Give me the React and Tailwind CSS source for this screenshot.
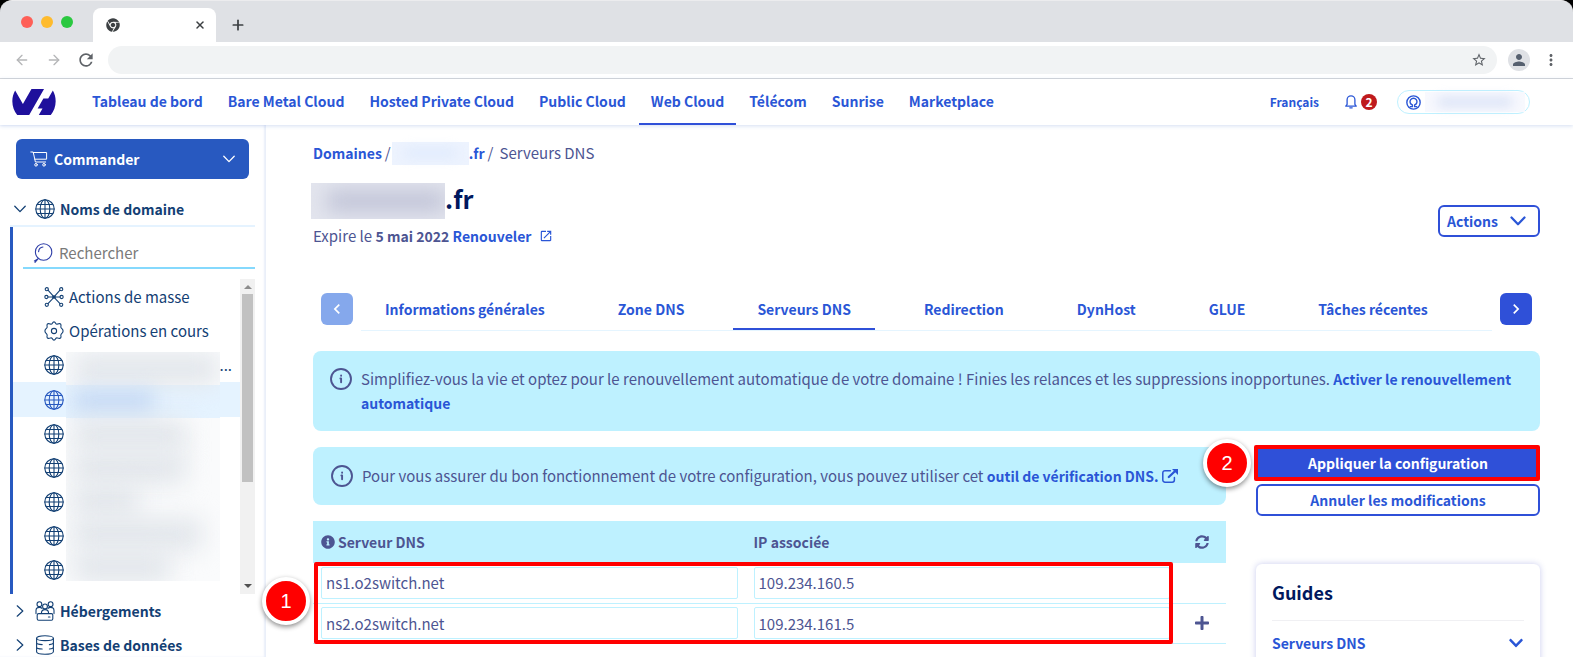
import { ArrowLeft, ArrowRight, Plus, X } from "lucide-react";
import { FaChevronDown, FaChrome, FaInfoCircle, FaPlus, FaSyncAlt } from "react-icons/fa";
import {
  MdChevronLeft,
  MdChevronRight,
  MdMoreVert,
  MdOpenInNew,
  MdPerson,
  MdRefresh,
  MdStarBorder,
} from "react-icons/md";

const NAV = [
  "Tableau de bord",
  "Bare Metal Cloud",
  "Hosted Private Cloud",
  "Public Cloud",
  "Web Cloud",
  "Télécom",
  "Sunrise",
  "Marketplace",
];

const TABS = [
  "Informations générales",
  "Zone DNS",
  "Serveurs DNS",
  "Redirection",
  "DynHost",
  "GLUE",
  "Tâches récentes",
];

const SERVERS = [
  { host: "ns1.o2switch.net", ip: "109.234.160.5" },
  { host: "ns2.o2switch.net", ip: "109.234.161.5" },
];

const DOMAINS = [
  { width: "w-36", more: true },
  { width: "w-20", active: true },
  { width: "w-28" },
  { width: "w-28" },
  { width: "w-16" },
  { width: "w-32" },
  { width: "w-24" },
];

function Line({ viewBox = "0 0 20 20", width = 1.1, className, children }) {
  return (
    <svg
      viewBox={viewBox}
      className={className}
      fill="none"
      stroke="currentColor"
      strokeWidth={width}
      strokeLinecap="round"
      strokeLinejoin="round"
      aria-hidden="true"
    >
      {children}
    </svg>
  );
}

const Globe = ({ className }) => (
  <Line className={className}>
    <circle cx="10" cy="10" r="9.2" />
    <ellipse cx="10" cy="10" rx="4.8" ry="9.2" />
    <path d="M10 .8v18.4M.8 10h18.4M2.2 5.5h15.6M2.2 14.5h15.6" />
  </Line>
);

const Chevron = ({ className, width = 1.3 }) => (
  <Line viewBox="0 0 12 8" width={width} className={className}>
    <path d="M.8 1.2 6 6.6l5.2-5.4" />
  </Line>
);

const ChevronSide = ({ className }) => (
  <Line viewBox="0 0 8 12" width={1.2} className={className}>
    <path d="M1.2.8 6.8 6l-5.6 5.2" />
  </Line>
);

const Cart = ({ className }) => (
  <Line viewBox="0 0 18 16" width={1} className={className}>
    <path d="M.8 1h2.4l2.200 10h10.200M3.200 1.500h13.400v6.700H4.800" />
    <circle cx="6" cy="13.8" r="1.3" />
    <circle cx="14" cy="13.8" r="1.3" />
  </Line>
);

const Search = ({ className }) => (
  <Line className={className}>
    <circle cx="10.6" cy="9" r="8.2" />
    <path d="M5.600 8.6a5 5 0 0 1 4.4-4.600M5.400 15.4 2 19.400M1.400 18l4.200-2.600" />
  </Line>
);

const Mass = ({ className }) => (
  <Line className={className}>
    <circle cx="2.8" cy="2.2" r="1.6" />
    <circle cx="17.2" cy="2.2" r="1.6" />
    <circle cx="2.4" cy="10" r="1.6" />
    <circle cx="17.6" cy="10" r="1.6" />
    <circle cx="2.8" cy="17.8" r="1.6" />
    <circle cx="17.2" cy="17.8" r="1.6" />
    <path d="M4 10h12M4 3.2 8 7.6l4 4.8 4 4.2M16 3.2l-4 4.4-4 4.8-4 4.2" />
    <circle cx="10" cy="10" r="1.2" />
  </Line>
);

const Gear = ({ className }) => (
  <Line className={className}>
    <path d="M8.200 2.600Q10-.8 11.800 2.600q.7.900 1.900.4 3.400-1.200 3.300 1.600-.6 1.600.4 2.600 3.400 2.800 0 5.600-1 1-.4 2.600.1 2.800-3.300 1.600-1.200-.5-1.900.4Q10 20.800 8.200 17.400q-.7-.9-1.900-.4-3.400 1.200-3.300-1.600.6-1.600-.4-2.600-3.400-2.800 0-5.600 1-1 .4-2.600-.1-2.800 3.300-1.600 1.200.5 1.900-.4z" />
    <circle cx="10" cy="10" r="2.6" />
  </Line>
);

const Hosting = ({ className }) => (
  <Line className={className}>
    <circle cx="4.4" cy="3.2" r="2.4" />
    <circle cx="15.6" cy="3.2" r="2.4" />
    <circle cx="10" cy="5.400" r="2.400" />
    <path d="M1 12.600V9.400q0-3 3.400-3 1.800 0 2.600 1M19 12.600V9.400q0-3-3.400-3-1.800 0-2.600 1M6.400 12.400q0-3.800 3.600-3.800t3.600 3.800" />
    <rect x="2.200" y="12.600" width="15.600" height="6.600" rx="1.400" />
    <path d="M13.400 16h1.600" />
  </Line>
);

const Database = ({ className }) => (
  <Line className={className}>
    <ellipse cx="10" cy="3.200" rx="8.400" ry="2.400" />
    <path d="M1.600 3.200v13.600c0 3.200 16.800 3.200 16.800 0V3.200M1.600 7.600c0 1.400 3 2 5.600 2M18.400 7.600c0 1.200-1.400 1.800-4 2M1.600 12c0 1.400 3 2 5.600 2M18.400 12c0 1.200-1.400 1.800-4 2" />
  </Line>
);

const Bell = ({ className }) => (
  <Line viewBox="0 0 12 14" width={1.3} className={className}>
    <path d="M.8 11.200h10.400L9.900 9.400V4.800a3.900 3.900 0 0 0-7.800 0v4.600zM4.800 12.800h2.400" />
  </Line>
);

const User = ({ className }) => (
  <Line viewBox="0 0 16 16" width={1.5} className={className}>
    <circle cx="8" cy="8" r="7.100" />
    <path d="M4.600 12.400h2.200v-1.800a3.700 3.700 0 1 1 2.400 0v1.800h2.200" />
  </Line>
);

const Info = ({ className }) => (
  <Line viewBox="0 0 22 22" width={1.900} className={className}>
    <circle cx="11" cy="11" r="10" />
    <path d="M10.400 10.400h.7v3.800M11.100 7.500v.200" />
  </Line>
);

const External = ({ className }) => (
  <Line viewBox="0 0 16 14" width={1.500} className={className}>
    <path d="M8.400 1.700H3A2.200 2.200 0 0 0 .8 3.900V11A2.200 2.200 0 0 0 3 13.200h7.200a2.200 2.200 0 0 0 2.200-2.200V8.400" />
    <path d="m6.800 8 6.400-6" strokeWidth="2.300" />
    <path d="M10 0h6v6z" fill="currentColor" stroke="none" />
  </Line>
);

function BrowserChrome() {
  return (
    <div className="bg-black">
      <div className="flex h-[42px] items-end rounded-t-xl border-t border-[#ececee] bg-[#dfe1e5] pl-[21px]">
        <div className="flex h-[41px] items-center gap-2">
          <span className="size-3 rounded-full bg-[#fe5f57]" />
          <span className="size-3 rounded-full bg-[#febb2e]" />
          <span className="size-3 rounded-full bg-[#2ac840]" />
        </div>
        <div className="ml-5 flex h-[34px] w-[123px] items-center justify-between rounded-t-lg bg-white px-[13px] text-[#3c4043]">
          <FaChrome className="size-3.5" />
          <button aria-label="Fermer l’onglet" className="-mr-[3px]">
            <X className="size-3" strokeWidth={3} />
          </button>
        </div>
        <button aria-label="Nouvel onglet" className="mb-[9px] ml-3.5 text-[#3c4043]">
          <Plus className="size-4" strokeWidth={2.600} />
        </button>
      </div>
      <div className="flex h-[37px] items-center border-b border-[#d7d8da] bg-white pr-[13px] pl-[14px]">
        <div className="flex items-center gap-4 text-[#b5b6b8]">
          <button aria-label="Précédent"><ArrowLeft className="size-4" /></button>
          <button aria-label="Suivant"><ArrowRight className="size-4" /></button>
          <button aria-label="Actualiser" className="-ml-0.5 text-[#5f6368]"><MdRefresh className="size-5" /></button>
        </div>
        <div className="ml-3 flex h-7 flex-1 items-center rounded-full bg-[#f1f3f4] pr-2.5">
          <input aria-label="Adresse" className="min-w-0 flex-1 bg-transparent px-4 outline-none" />
          <MdStarBorder className="size-4 text-[#5f6368]" />
        </div>
        <span className="ml-[11px] flex size-[22px] items-center justify-center rounded-full bg-[#dfe1e5] text-[#56606f]">
          <MdPerson className="size-[18px]" />
        </span>
        <button aria-label="Menu" className="ml-3 text-[#5f6368]"><MdMoreVert className="size-[18px]" /></button>
      </div>
    </div>
  );
}

function Header() {
  return (
    <header className="relative z-10 flex h-[46px] items-center bg-white pr-[43px] pl-3 text-[#2a56d6] shadow-[0_1px_4px_rgba(40,89,192,0.2)]">
      <svg viewBox="0 4.800 24 14.400" className="h-[26px] w-11 text-[#1f109c]" fill="currentColor" role="img" aria-label="OVHcloud">
        <path d="M19.881 10.095l2.563-4.450C23.434 7.389 24 9.404 24 11.555c0 2.880-1.017 5.523-2.710 7.594h-6.620l2.040-3.541h-2.696l3.176-5.513h2.691zm-2.320-5.243L9.333 19.140l.003.009H2.709C1.014 17.077 0 14.435 0 11.555c0-2.152.570-4.170 1.561-5.918L5.855 13.100 10.600 4.852h6.962z" />
      </svg>
      <nav className="ml-6 flex h-full flex-1 gap-px text-sm font-bold">
        {NAV.map((item) => (
          <a
            key={item}
            href="#"
            className={
              item === "Web Cloud"
                ? "flex items-center border-b-2 border-[#2f50d8] px-3"
                : "flex items-center border-b-2 border-transparent px-3"
            }
          >
            {item}
          </a>
        ))}
      </nav>
      <a href="#" className="text-xs font-bold">Français</a>
      <a href="#" className="ml-[26px] flex items-center gap-1" aria-label="Notifications">
        <Bell className="h-3.5 w-3" />
        <span className="flex size-4 items-center justify-center rounded-full bg-[#bf1a1d] text-xs font-bold text-white">2</span>
      </a>
      <button aria-label="Compte" className="ml-5 flex h-6 w-[133px] items-center gap-1 rounded-full border border-[#bef1ff] pl-2">
        <User className="size-[15px]" />
        <span className="flex h-5 w-[100px] items-center bg-[#f8f9fe] px-3">
          <span className="h-2 w-full rounded-full bg-[#d3ddf5] blur-[6px]" />
        </span>
      </button>
    </header>
  );
}

function Sidebar() {
  return (
    <aside className="flex w-[266px] shrink-0 flex-col pt-3.5 text-[15px] text-[#134074] shadow-[inset_-2px_0_2px_rgba(40,89,192,0.1)]">
      <button className="mr-[17px] ml-4 flex h-10 shrink-0 items-center rounded-md bg-[#2859c0] px-3.5 text-sm font-bold text-white">
        <Cart className="h-4 w-[18px]" />
        <span className="ml-1.5 flex-1 text-left">Commander</span>
        <Chevron className="h-2 w-3" />
      </button>
      <a href="#" className="mt-[13px] flex h-[33px] shrink-0 items-center pl-3.5 text-sm font-bold">
        <Chevron className="h-2 w-3" />
        <Globe className="ml-[9px] size-5" />
        <span className="ml-[5px]">Noms de domaine</span>
      </a>
      <div className="mr-[11px] ml-2.5 shrink-0 border-t-2 border-[#e5f3ff]">
        <div className="border-l-[3px] border-[#2859c0] pt-3">
          <label className="ml-2.5 flex h-[30px] items-center gap-1.5 border-b-2 border-[#85d9fd] pl-2.5">
            <Search className="size-5 shrink-0 text-[#2f3fa8]" />
            <input aria-label="Rechercher" placeholder="Rechercher" className="w-full min-w-0 outline-none placeholder:text-[#7a7a7a]" />
          </label>
          <div className="mt-2.5 flex">
            <div className="relative min-w-0 flex-1 pt-px pb-[7px]">
              <a href="#" className="flex h-[34px] items-center gap-[5px] pl-[31px]">
                <Mass className="size-5" />
                Actions de masse
              </a>
              <a href="#" className="flex h-[34px] items-center gap-[5px] pl-[31px]">
                <Gear className="size-5" />
                Opérations en cours
              </a>
              {DOMAINS.map((d, i) => (
                <a
                  key={i}
                  href="#"
                  aria-label={"Domaine " + (i + 1)}
                  className={
                    d.active
                      ? "flex h-[35px] items-center bg-[#e5f3ff] pl-[31px] text-[#2859c0]"
                      : "flex h-[34px] items-center pl-[31px]"
                  }
                >
                  <Globe className="size-5" />
                  {d.more && <span className="mr-2 ml-auto">...</span>}
                </a>
              ))}
              <div className="absolute top-[73px] left-[53px] h-[229px] w-[154px] overflow-hidden bg-[#fafbfc]">
                {DOMAINS.map((d, i) => (
                  <div key={i} className={d.active ? "flex h-[33px] items-center bg-[#e5f3ff] pl-2" : "flex h-[33px] items-center pl-2"}>
                    <div className={d.active ? d.width + " h-6 bg-[#c6daf5] blur-[10px]" : d.width + " h-8 bg-[#e2e6eb] blur-[12px]"} />
                  </div>
                ))}
              </div>
            </div>
            <div className="flex w-[15px] flex-col items-center bg-[#f1f1f1] py-1.5" aria-hidden="true">
              <svg viewBox="0 0 8 4" className="h-1 w-2" fill="#8c8c8c"><path d="M0 4 4 0l4 4z" /></svg>
              <div className="mt-[5px] h-[188px] w-[11px] bg-[#c1c1c1]" />
              <svg viewBox="0 0 8 4" className="mt-auto h-1 w-2" fill="#505050"><path d="M0 0l4 4 4-4z" /></svg>
            </div>
          </div>
        </div>
      </div>
      <a href="#" className="flex h-[34px] shrink-0 items-center pl-4 text-sm font-bold">
        <ChevronSide className="h-3 w-2" />
        <Hosting className="ml-[11px] size-5" />
        <span className="ml-[5px]">Hébergements</span>
      </a>
      <a href="#" className="flex h-[34px] shrink-0 items-center pl-4 text-sm font-bold">
        <ChevronSide className="h-3 w-2" />
        <Database className="ml-[11px] size-5" />
        <span className="ml-[5px]">Bases de données</span>
      </a>
    </aside>
  );
}

function Step({ n, className }) {
  return (
    <span
      className={
        "absolute z-20 flex size-12 items-center justify-center rounded-full border-4 border-white bg-[#ff0000] font-[Liberation_Sans,sans-serif] text-xl text-white shadow-[0_2px_5px_rgba(0,0,0,0.45)] " +
        className
      }
    >
      {n}
    </span>
  );
}

function DnsTable() {
  const field = "block h-8 w-full rounded-xs border border-[#bef1ff] bg-white px-1 outline-none";
  return (
    <div className="relative mt-4">
      <table className="w-full table-fixed border-collapse text-left">
        <colgroup>
          <col />
          <col />
          <col className="w-12" />
        </colgroup>
        <thead className="bg-[#bef1ff] text-sm">
          <tr className="h-[42px]">
            <th className="px-2 font-bold">
              <span className="flex items-center gap-[3px]">
                <FaInfoCircle className="size-3.5" />
                Serveur DNS
              </span>
            </th>
            <th className="px-2 font-bold">IP associée</th>
            <th>
              <button aria-label="Réinitialiser" className="mx-auto block"><FaSyncAlt className="size-3.5" /></button>
            </th>
          </tr>
        </thead>
        <tbody>
          {SERVERS.map((s, i) => (
            <tr key={s.host} className="h-10 border-b border-[#bef1ff]">
              <td className="px-2"><input aria-label={"Serveur DNS " + (i + 1)} defaultValue={s.host} className={field} /></td>
              <td className="px-2"><input aria-label={"IP associée " + (i + 1)} defaultValue={s.ip} className={field} /></td>
              <td>
                {i === SERVERS.length - 1 && (
                  <button aria-label="Ajouter" className="mx-auto block"><FaPlus className="size-4" /></button>
                )}
              </td>
            </tr>
          ))}
        </tbody>
      </table>
      <div className="pointer-events-none absolute top-[41px] right-[53px] bottom-0 left-px rounded-xs border-4 border-[#ff0000]" />
      <Step n={1} className="top-14 -left-[51px]" />
    </div>
  );
}

function Main() {
  const arrow = "mt-2 mb-1.5 flex size-8 shrink-0 items-center justify-center rounded-md text-white";
  return (
    <main className="min-w-0 flex-1 pt-4 pr-[33px] pl-[47px] text-[15px] leading-6 text-[#4d5592]">
      <div className="flex items-center">
        <a href="#" className="text-sm leading-6 font-bold text-[#2a56d6]">Domaines</a>
        <span className="ml-[3px]">/</span>
        <span className="ml-px flex h-[23px] w-[77px] items-center bg-[#edf3fe] px-3">
          <span className="h-2 w-full rounded-full bg-[#dde9fd] blur-[6px]" />
        </span>
        <a href="#" className="text-sm leading-6 font-bold text-[#2a56d6]">.fr</a>
        <span className="ml-[3px]">/</span>
        <span className="ml-1.5">Serveurs DNS</span>
      </div>

      <div className="mt-[18px] flex items-center justify-between">
        <div>
          <h1 className="flex h-9 items-start text-[25px] leading-[30px] font-bold text-[#00185e]">
            <span className="-ml-0.5 flex h-9 w-[134px] items-center overflow-hidden bg-[#e3e5ee] pl-4">
              <span className="h-5 w-full bg-[#bfc2d6] blur-[10px]" />
            </span>
            .fr
          </h1>
          <p className="mt-[5px]">
            Expire le <b className="text-sm font-bold">5 mai 2022</b>{" "}
            <a href="#" className="text-sm font-bold text-[#2a56d6]">
              Renouveler <MdOpenInNew className="ml-1 inline size-3.5 align-[-1px]" />
            </a>
          </p>
        </div>
        <button className="mt-2.5 flex h-8 items-center gap-3 rounded-md border-2 border-[#2f50d8] pr-3 pl-[7px] text-sm font-bold text-[#2a56d6]">
          Actions
          <Chevron className="h-2.5 w-4" width={1.800} />
        </button>
      </div>

      <div className="mt-[37px] flex items-center px-2">
        <button aria-label="Onglets précédents" className={arrow + " bg-[#85a8ec]"}><MdChevronLeft className="size-5" /></button>
        <div className="mx-2 flex h-[42px] flex-1 gap-[25px] self-end border-b border-[#e5f5ff] text-sm font-bold text-[#2a56d6]">
          {TABS.map((t) => (
            <a
              key={t}
              href="#"
              className={
                t === "Serveurs DNS"
                  ? "flex items-center border-b-2 border-[#2f50d8] px-6"
                  : "flex items-center border-b-2 border-transparent px-6"
              }
            >
              {t}
            </a>
          ))}
        </div>
        <button aria-label="Onglets suivants" className={arrow + " bg-[#2f50d8]"}><MdChevronRight className="size-5" /></button>
      </div>

      <div className="mt-5 flex items-start gap-[9px] rounded-lg bg-[#bef1ff] p-4">
        <Info className="mt-px ml-px size-[22px] shrink-0" />
        <p>
          Simplifiez-vous la vie et optez pour le renouvellement automatique de votre domaine ! Finies les relances et les suppressions inopportunes.{" "}
          <a href="#" className="text-sm leading-6 font-bold text-[#2a56d6]">Activer le renouvellement automatique</a>
        </p>
      </div>

      <div className="mt-4 grid grid-cols-[minmax(0,1fr)_284px] gap-[30px]">
        <div>
          <div className="flex h-[58px] items-center gap-[9px] rounded-lg bg-[#bef1ff] px-[18px]">
            <Info className="size-[22px] shrink-0" />
            <p>
              Pour vous assurer du bon fonctionnement de votre configuration, vous pouvez utiliser cet{" "}
              <a href="#" className="text-sm leading-6 font-bold text-[#2a56d6]">
                outil de vérification DNS. <External className="inline h-3.5 w-4 align-[-1px]" />
              </a>
            </p>
          </div>
          <DnsTable />
        </div>
        <div>
          <div className="relative">
            <button className="block h-8 w-full bg-[#2f50d8] text-sm font-bold text-white">Appliquer la configuration</button>
            <div className="pointer-events-none absolute -inset-y-0.5 right-0 -left-0.5 rounded-xs border-4 border-[#ff0000]" />
            <Step n={2} className="-top-2 -left-[53px]" />
          </div>
          <button className="mt-[5px] block h-8 w-full rounded-md border-2 border-[#2f50d8] text-sm font-bold text-[#2a56d6]">
            Annuler les modifications
          </button>
          <section className="mt-12 rounded-md p-4 shadow-[0_0_6px_rgba(77,85,200,0.3)]">
            <h2 className="border-b border-[#f0f0f3] pb-4 text-lg leading-6 font-bold text-[#00185e]">Guides</h2>
            <a href="#" className="mt-2.5 flex items-center justify-between text-sm leading-6 font-bold text-[#2a56d6]">
              Serveurs DNS
              <FaChevronDown className="size-4" />
            </a>
          </section>
        </div>
      </div>
    </main>
  );
}

export default function App() {
  return (
    <div className="flex h-screen flex-col overflow-hidden bg-white font-[Noto_Sans_CJK_SC,Noto_Sans,sans-serif]">
      <BrowserChrome />
      <Header />
      <div className="flex min-h-0 flex-1 overflow-hidden">
        <Sidebar />
        <Main />
      </div>
    </div>
  );
}
